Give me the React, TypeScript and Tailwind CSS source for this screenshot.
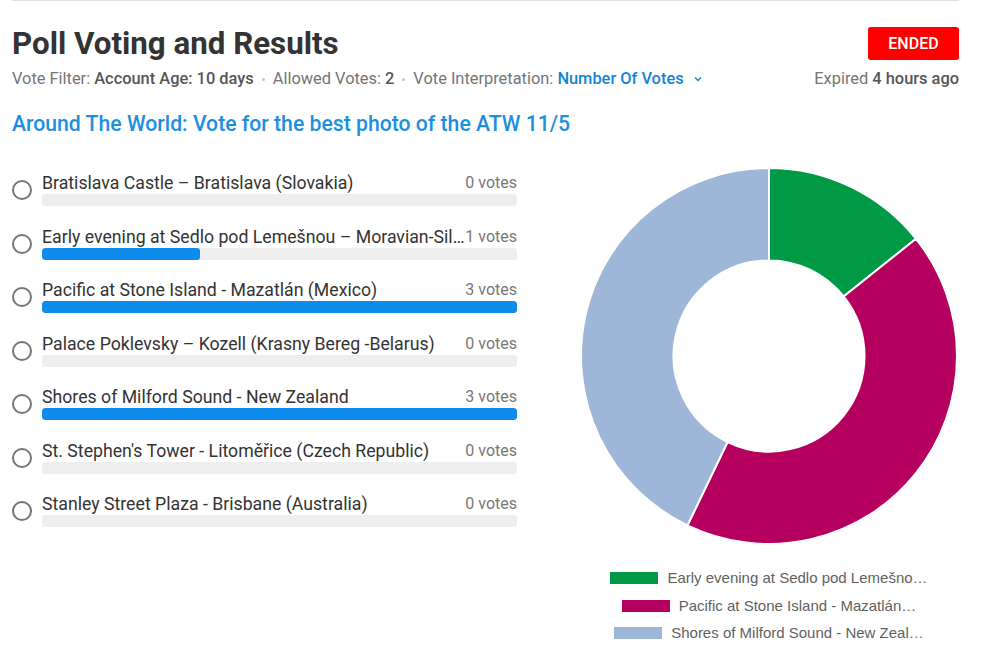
import React from 'react';

const options = [
  { name: 'Bratislava Castle – Bratislava (Slovakia)', votes: 0 },
  { name: 'Early evening at Sedlo pod Lemešnou – Moravian-Silesian Region (Czech Republic)', votes: 1 },
  { name: 'Pacific at Stone Island - Mazatlán (Mexico)', votes: 3 },
  { name: 'Palace Poklevsky – Kozell (Krasny Bereg -Belarus)', votes: 0 },
  { name: 'Shores of Milford Sound - New Zealand', votes: 3 },
  { name: "St. Stephen's Tower - Litoměřice (Czech Republic)", votes: 0 },
  { name: 'Stanley Street Plaza - Brisbane (Australia)', votes: 0 },
];

const slices = [
  { label: 'Early evening at Sedlo pod Lemešno…', votes: 1, color: '#009a46' },
  { label: 'Pacific at Stone Island - Mazatlán…', votes: 3, color: '#b6005f' },
  { label: 'Shores of Milford Sound - New Zeal…', votes: 3, color: '#9eb7d8' },
];

const maxVotes = Math.max(...options.map((o) => o.votes));

function arcPath(cx: number, cy: number, R: number, r: number, a0: number, a1: number) {
  const pt = (rad: number, a: number) => [cx + rad * Math.sin(a), cy - rad * Math.cos(a)];
  const large = a1 - a0 > Math.PI ? 1 : 0;
  const [x0, y0] = pt(R, a0);
  const [x1, y1] = pt(R, a1);
  const [x2, y2] = pt(r, a1);
  const [x3, y3] = pt(r, a0);
  return `M${x0} ${y0} A${R} ${R} 0 ${large} 1 ${x1} ${y1} L${x2} ${y2} A${r} ${r} 0 ${large} 0 ${x3} ${y3} Z`;
}

function Donut() {
  const total = slices.reduce((s, x) => s + x.votes, 0);
  let acc = 0;
  return (
    <svg width="380" height="380" viewBox="0 0 380 380">
      {slices.map((s) => {
        const a0 = (acc / total) * Math.PI * 2;
        acc += s.votes;
        const a1 = (acc / total) * Math.PI * 2;
        return (
          <path
            key={s.label}
            d={arcPath(190, 190, 188, 95.5, a0, a1)}
            fill={s.color}
            stroke="#ffffff"
            strokeWidth="2"
          />
        );
      })}
    </svg>
  );
}

function Dot() {
  return <span className="mx-[8px] inline-block w-[3px] h-[3px] rounded-full bg-[#c4c4c4] align-middle" />;
}

export default function App() {
  return (
    <div className="w-[1007px] h-[661px] bg-white px-3 font-['Roboto',sans-serif] overflow-hidden">
      <div className="w-[947px]">
        <div className="border-t border-[#e0e0e0]" />

        <div className="flex items-center justify-between mt-[26px] h-[33px]">
          <h1 className="text-[31.3px] leading-[33px] font-bold text-[#333333]">Poll Voting and Results</h1>
          <button className="w-[91px] h-[33px] rounded-[3px] bg-[#ff0000] text-white text-[16px] font-medium">
            ENDED
          </button>
        </div>

        <div className="flex items-center justify-between mt-[9px] text-[16.4px] leading-[20px] text-[#757575]">
          <div className="flex items-center">
            <span>
              Vote Filter: <span className="font-medium text-[#555555]">Account Age: 10 days</span>
            </span>
            <Dot />
            <span>
              Allowed Votes: <span className="font-medium text-[#555555]">2</span>
            </span>
            <Dot />
            <span>Vote Interpretation:&nbsp;</span>
            <span className="flex items-center font-medium text-[#1584d8]">
              Number Of Votes
              <svg className="ml-[9px]" width="10" height="10" viewBox="0 0 10 10">
                <path d="M2 3.5 L5 6.5 L8 3.5" fill="none" stroke="#1584d8" strokeWidth="1.5" />
              </svg>
            </span>
          </div>
          <span>
            Expired <span className="font-medium text-[#555555]">4 hours ago</span>
          </span>
        </div>

        <h2 className="mt-[23px] text-[21.2px] leading-[24px] font-medium text-[#1b8fe2]">
          Around The World: Vote for the best photo of the ATW 11/5
        </h2>

        <div className="flex mt-[30px]">
          <div className="w-[505px] pt-[7px] flex flex-col gap-[20.5px]">
            {options.map((o) => (
              <div key={o.name} className="flex items-start">
                <div className="mt-[7px] w-5 h-5 rounded-full border-2 border-[#757575] shrink-0" />
                <div className="ml-[10px] flex-1 min-w-0">
                  <div className="flex items-center justify-between h-5">
                    <span className="truncate min-w-0 text-[17.7px] leading-5 text-[#333333]">{o.name}</span>
                    <span className="shrink-0 text-[16px] leading-5 text-[#777777]">{o.votes} votes</span>
                  </div>
                  <div className="mt-[1px] h-3 rounded-[3px] bg-[#eeeeee] overflow-hidden">
                    {o.votes > 0 && (
                      <div
                        className="h-full rounded-[3px] bg-[#0d8cec]"
                        style={{ width: `${(o.votes / maxVotes) * 100}%` }}
                      />
                    )}
                  </div>
                </div>
              </div>
            ))}
          </div>

          <div className="ml-[62px] w-[380px] flex flex-col items-center">
            <Donut />
            <div className="mt-[24px] flex flex-col items-center gap-[11.5px] font-['Liberation_Sans',Arial,sans-serif] text-[15px] leading-4 text-[#5f5f5f]">
              {slices.map((s) => (
                <div key={s.label} className="flex items-center">
                  <span className="w-12 h-3 mr-[9px]" style={{ backgroundColor: s.color }} />
                  <span>{s.label}</span>
                </div>
              ))}
            </div>
          </div>
        </div>
      </div>
    </div>
  );
}
